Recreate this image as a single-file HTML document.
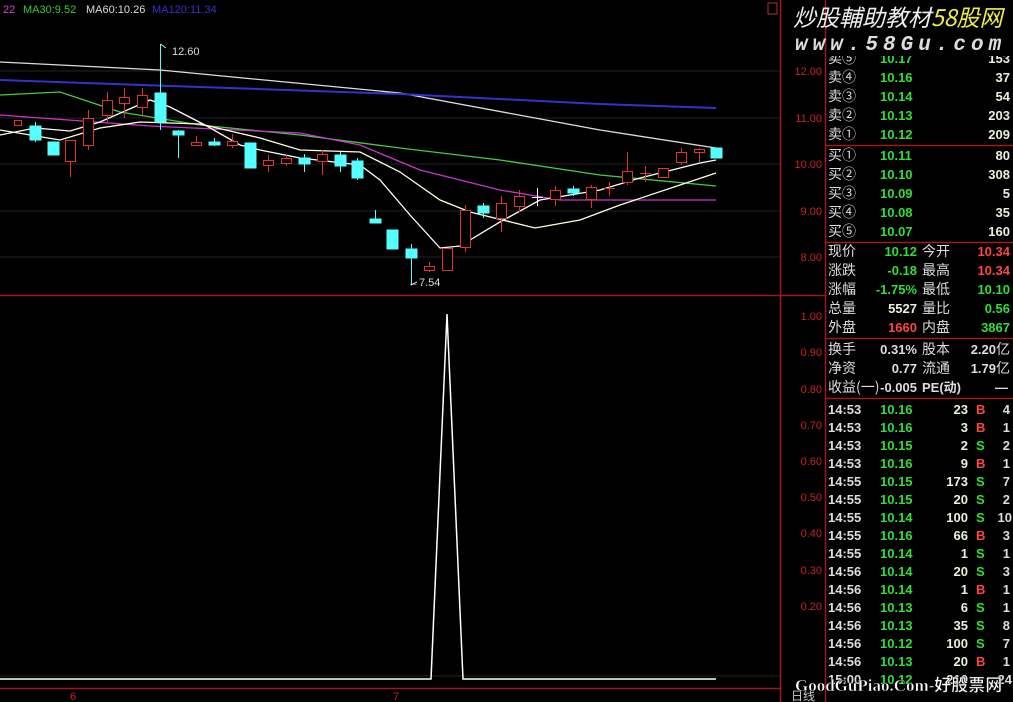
<!DOCTYPE html>
<html><head><meta charset="utf-8"><style>
html,body{margin:0;padding:0;background:#000;width:1013px;height:702px;overflow:hidden}
svg{display:block}
text{font-family:"Liberation Sans","Noto Sans CJK SC",sans-serif}
.r{font-size:13px;font-weight:bold}
.c{font-family:"Noto Sans CJK SC","WenQuanYi Zen Hei",sans-serif;font-size:14px;fill:#ddd;font-weight:normal}
.g{fill:#3d3}.y{fill:#eed}.w{fill:#ddd}.rd{fill:#f44}
.ax{font-size:11px;fill:#c22}
</style></head><body>
<svg width="1013" height="702" viewBox="0 0 1013 702" xmlns="http://www.w3.org/2000/svg">
<rect width="1013" height="702" fill="#000"/>
<g stroke="#222" stroke-width="1">
<line x1="0" y1="71" x2="780" y2="71"/><line x1="0" y1="118" x2="780" y2="118"/><line x1="0" y1="164" x2="780" y2="164"/><line x1="0" y1="211" x2="780" y2="211"/><line x1="0" y1="257" x2="780" y2="257"/>
<line x1="0" y1="676" x2="780" y2="676"/>
</g>
<g stroke="#a01818" stroke-width="1.5" fill="none">
<line x1="0" y1="295.5" x2="825" y2="295.5"/>
<line x1="780.5" y1="0" x2="780.5" y2="702"/>
<line x1="825.5" y1="0" x2="825.5" y2="702"/>
<line x1="0" y1="688.5" x2="780" y2="688.5"/>
<line x1="825" y1="145.5" x2="1013" y2="145.5"/>
<line x1="825" y1="242.5" x2="1013" y2="242.5"/>
<line x1="825" y1="338.5" x2="1013" y2="338.5"/>
<line x1="825" y1="398.5" x2="1013" y2="398.5"/>
</g>
<g class="ax" text-anchor="end">
<text x="822" y="75">12.00</text><text x="822" y="122">11.00</text><text x="822" y="168">10.00</text><text x="822" y="215">9.00</text><text x="822" y="261">8.00</text>
<text x="822" y="320">1.00</text><text x="822" y="356">0.90</text><text x="822" y="393">0.80</text><text x="822" y="429">0.70</text><text x="822" y="465">0.60</text><text x="822" y="501">0.50</text><text x="822" y="537">0.40</text><text x="822" y="574">0.30</text><text x="822" y="610">0.20</text>
</g>
<text x="70" y="700" class="ax">6</text><text x="393" y="700" class="ax">7</text>
<text x="791" y="700" style="font-size:12px;fill:#ccc;font-family:'Noto Sans CJK SC',sans-serif">日线</text>
<text x="3" y="13" style="font-size:11px;fill:#c4c">22</text>
<text x="23" y="13" style="font-size:11px;fill:#3c3">MA30:9.52</text>
<text x="86" y="13" style="font-size:11px;fill:#ddd">MA60:10.26</text>
<text x="152" y="13" style="font-size:11px;fill:#33c">MA120:11.34</text>
<rect x="768" y="3" width="9" height="11" fill="none" stroke="#a33"/>
<g fill="none" stroke-width="1.3">
<polyline stroke="#ddd" points="0,62 160,70 400,93 600,130 716,148"/>
<polyline stroke="#3333cc" stroke-width="2" points="0,80 200,87 400,94 600,104 716,108"/>
<polyline stroke="#4c4" points="0,95 60,92 120,112 200,125 300,135 400,148 500,160 600,175 716,186"/>
<polyline stroke="#c3c" points="0,115 150,126 300,133 360,145 420,170 500,190 560,200 716,200"/>
<polyline stroke="#fff" points="0,135 35,128 70,131 100,122 150,100 170,107 205,125 240,145 260,150 300,158 360,165 380,180 410,215 440,248 460,246 500,222 540,200 600,190 640,178 700,163 716,160"/>
<polyline stroke="#ffd" points="0,130 60,140 100,128 140,122 200,124 260,138 300,150 360,152 400,172 440,200 470,212 535,228 580,220 620,205 680,185 716,173"/>
</g>
<g stroke="#d33" fill="none" stroke-width="1">
<rect x="14.5" y="120.5" width="7" height="5"/>
<line x1="70.5" y1="140" x2="70.5" y2="177"/><rect x="65.5" y="140.5" width="10" height="21" fill="#000"/>
<line x1="88.5" y1="110" x2="88.5" y2="150"/><rect x="83.5" y="118.5" width="10" height="27" fill="#000"/>
<line x1="107.5" y1="92" x2="107.5" y2="122"/><rect x="102.5" y="100.5" width="10" height="15" fill="#000"/>
<line x1="124.5" y1="88" x2="124.5" y2="118"/><rect x="119.5" y="97.5" width="10" height="6" fill="#000"/>
<line x1="142.5" y1="88" x2="142.5" y2="115"/><rect x="137.5" y="95.5" width="10" height="12" fill="#000"/>
<line x1="196.5" y1="136" x2="196.5" y2="146"/><rect x="191.5" y="142.5" width="10" height="3" fill="#000"/>
<line x1="232.5" y1="134" x2="232.5" y2="148"/><rect x="227.5" y="141.5" width="10" height="4" fill="#000"/>
<line x1="268.5" y1="155" x2="268.5" y2="172"/><rect x="263.5" y="160.5" width="10" height="5" fill="#000"/>
<line x1="286.5" y1="155" x2="286.5" y2="166"/><rect x="281.5" y="158.5" width="10" height="5" fill="#000"/>
<line x1="322.5" y1="150" x2="322.5" y2="175"/><rect x="317.5" y="154.5" width="10" height="7" fill="#000"/>
<line x1="429.5" y1="262" x2="429.5" y2="272"/><rect x="424.5" y="266.5" width="10" height="4" fill="#000"/>
<rect x="442.5" y="248.5" width="10" height="22" fill="#000"/>
<line x1="465.5" y1="205" x2="465.5" y2="252"/><rect x="460.5" y="210.5" width="10" height="37" fill="#000"/>
<line x1="501.5" y1="196" x2="501.5" y2="232"/><rect x="496.5" y="203.5" width="10" height="15" fill="#000"/>
<line x1="519.5" y1="190" x2="519.5" y2="212"/><rect x="514.5" y="196.5" width="10" height="10" fill="#000"/>
<line x1="555.5" y1="186" x2="555.5" y2="206"/><rect x="550.5" y="190.5" width="10" height="9" fill="#000"/>
<line x1="591.5" y1="185" x2="591.5" y2="208"/><rect x="586.5" y="187.5" width="10" height="12" fill="#000"/>
<line x1="609.5" y1="182" x2="609.5" y2="196"/><line x1="604" y1="188.5" x2="615" y2="188.5"/>
<line x1="627.5" y1="152" x2="627.5" y2="185"/><rect x="622.5" y="171.5" width="10" height="11" fill="#000"/>
<line x1="645.5" y1="166" x2="645.5" y2="182"/><line x1="640" y1="173.5" x2="651" y2="173.5"/>
<rect x="658.5" y="168.5" width="10" height="9" fill="#000"/>
<line x1="681.5" y1="148" x2="681.5" y2="165"/><rect x="676.5" y="152.5" width="10" height="10" fill="#000"/>
<line x1="699.5" y1="148" x2="699.5" y2="162"/><rect x="694.5" y="149.5" width="10" height="3" fill="#000"/>
</g>
<g stroke="#fff" stroke-width="1"><line x1="537.5" y1="188" x2="537.5" y2="206"/><line x1="532" y1="197.5" x2="543" y2="197.5"/></g>
<g fill="#5ff" stroke="#5ff" stroke-width="1">
<line x1="35.5" y1="122" x2="35.5" y2="142"/><rect x="30" y="126" width="11" height="14"/>
<rect x="48" y="142" width="11" height="13"/>
<line x1="160.5" y1="44" x2="160.5" y2="130"/><rect x="155" y="93" width="11" height="29"/>
<line x1="178.5" y1="130" x2="178.5" y2="158"/><rect x="173" y="131" width="11" height="4"/>
<line x1="214.5" y1="138" x2="214.5" y2="146"/><rect x="209" y="142" width="11" height="3"/>
<rect x="245" y="143" width="11" height="25"/>
<line x1="304.5" y1="154" x2="304.5" y2="172"/><rect x="299" y="158" width="11" height="6"/>
<line x1="340.5" y1="152" x2="340.5" y2="172"/><rect x="335" y="155" width="11" height="11"/>
<line x1="357.5" y1="158" x2="357.5" y2="180"/><rect x="352" y="161" width="11" height="17"/>
<line x1="375.5" y1="210" x2="375.5" y2="223"/><rect x="370" y="219" width="11" height="4"/>
<rect x="387" y="230" width="11" height="19"/>
<line x1="411.5" y1="244" x2="411.5" y2="285"/><rect x="406" y="249" width="11" height="9"/>
<line x1="483.5" y1="203" x2="483.5" y2="218"/><rect x="478" y="206" width="11" height="7"/>
<line x1="573.5" y1="186" x2="573.5" y2="196"/><rect x="568" y="189" width="11" height="4"/>
<rect x="711" y="148" width="11" height="10"/>
</g>
<g stroke="#ddd" fill="none"><polyline points="160.5,44 166,48"/><polyline points="411,285 417,282"/></g>
<text x="172" y="55" style="font-size:11px;fill:#ddd">12.60</text>
<text x="408" y="286" style="font-size:11px;fill:#ddd">←7.54</text>
<polyline fill="none" stroke="#fff" stroke-width="1.5" points="0,679 431,679 447,314 463,679 716,679"/>
<g class="r">
<text x="828" y="63" class="c">卖⑤</text><text x="880" y="63" class="g">10.17</text><text x="1010" y="63" class="y" text-anchor="end">153</text>
<text x="828" y="82" class="c">卖④</text><text x="880" y="82" class="g">10.16</text><text x="1010" y="82" class="y" text-anchor="end">37</text>
<text x="828" y="101" class="c">卖③</text><text x="880" y="101" class="g">10.14</text><text x="1010" y="101" class="y" text-anchor="end">54</text>
<text x="828" y="120" class="c">卖②</text><text x="880" y="120" class="g">10.13</text><text x="1010" y="120" class="y" text-anchor="end">203</text>
<text x="828" y="139" class="c">卖①</text><text x="880" y="139" class="g">10.12</text><text x="1010" y="139" class="y" text-anchor="end">209</text>
<text x="828" y="160" class="c">买①</text><text x="880" y="160" class="g">10.11</text><text x="1010" y="160" class="y" text-anchor="end">80</text>
<text x="828" y="179" class="c">买②</text><text x="880" y="179" class="g">10.10</text><text x="1010" y="179" class="y" text-anchor="end">308</text>
<text x="828" y="198" class="c">买③</text><text x="880" y="198" class="g">10.09</text><text x="1010" y="198" class="y" text-anchor="end">5</text>
<text x="828" y="217" class="c">买④</text><text x="880" y="217" class="g">10.08</text><text x="1010" y="217" class="y" text-anchor="end">35</text>
<text x="828" y="236" class="c">买⑤</text><text x="880" y="236" class="g">10.07</text><text x="1010" y="236" class="y" text-anchor="end">160</text>
<text x="828" y="256" class="c">现价</text><text x="917" y="256" class="g" text-anchor="end">10.12</text><text x="922" y="256" class="c">今开</text><text x="1010" y="256" class="rd" text-anchor="end">10.34</text>
<text x="828" y="275" class="c">涨跌</text><text x="917" y="275" class="g" text-anchor="end">-0.18</text><text x="922" y="275" class="c">最高</text><text x="1010" y="275" class="rd" text-anchor="end">10.34</text>
<text x="828" y="294" class="c">涨幅</text><text x="917" y="294" class="g" text-anchor="end">-1.75%</text><text x="922" y="294" class="c">最低</text><text x="1010" y="294" class="g" text-anchor="end">10.10</text>
<text x="828" y="313" class="c">总量</text><text x="917" y="313" class="y" text-anchor="end">5527</text><text x="922" y="313" class="c">量比</text><text x="1010" y="313" class="g" text-anchor="end">0.56</text>
<text x="828" y="332" class="c">外盘</text><text x="917" y="332" class="rd" text-anchor="end">1660</text><text x="922" y="332" class="c">内盘</text><text x="1010" y="332" class="g" text-anchor="end">3867</text>
<text x="828" y="354" class="c">换手</text><text x="917" y="354" class="w" text-anchor="end">0.31%</text><text x="922" y="354" class="c">股本</text><text x="1010" y="354" class="w" text-anchor="end">2.20<tspan class="c">亿</tspan></text>
<text x="828" y="373" class="c">净资</text><text x="917" y="373" class="w" text-anchor="end">0.77</text><text x="922" y="373" class="c">流通</text><text x="1010" y="373" class="w" text-anchor="end">1.79<tspan class="c">亿</tspan></text>
<text x="828" y="392" class="c">收益(一)</text><text x="917" y="392" class="w" text-anchor="end">-0.005</text><text x="922" y="392" class="w">PE(动)</text><text x="1008" y="392" class="w" text-anchor="end">—</text>
</g>
<g class="r">
<text x="828" y="414" class="w">14:53</text><text x="880" y="414" class="g">10.16</text><text x="968" y="414" class="y" text-anchor="end">23</text><text x="976" y="414" class="rd">B</text><text x="1010" y="414" class="w" text-anchor="end">4</text>
<text x="828" y="432" class="w">14:53</text><text x="880" y="432" class="g">10.16</text><text x="968" y="432" class="y" text-anchor="end">3</text><text x="976" y="432" class="rd">B</text><text x="1010" y="432" class="w" text-anchor="end">1</text>
<text x="828" y="450" class="w">14:53</text><text x="880" y="450" class="g">10.15</text><text x="968" y="450" class="y" text-anchor="end">2</text><text x="976" y="450" class="g">S</text><text x="1010" y="450" class="w" text-anchor="end">2</text>
<text x="828" y="468" class="w">14:53</text><text x="880" y="468" class="g">10.16</text><text x="968" y="468" class="y" text-anchor="end">9</text><text x="976" y="468" class="rd">B</text><text x="1010" y="468" class="w" text-anchor="end">1</text>
<text x="828" y="486" class="w">14:55</text><text x="880" y="486" class="g">10.15</text><text x="968" y="486" class="y" text-anchor="end">173</text><text x="976" y="486" class="g">S</text><text x="1010" y="486" class="w" text-anchor="end">7</text>
<text x="828" y="504" class="w">14:55</text><text x="880" y="504" class="g">10.15</text><text x="968" y="504" class="y" text-anchor="end">20</text><text x="976" y="504" class="g">S</text><text x="1010" y="504" class="w" text-anchor="end">2</text>
<text x="828" y="522" class="w">14:55</text><text x="880" y="522" class="g">10.14</text><text x="968" y="522" class="y" text-anchor="end">100</text><text x="976" y="522" class="g">S</text><text x="1012" y="522" class="w" text-anchor="end">10</text>
<text x="828" y="540" class="w">14:55</text><text x="880" y="540" class="g">10.16</text><text x="968" y="540" class="y" text-anchor="end">66</text><text x="976" y="540" class="rd">B</text><text x="1010" y="540" class="w" text-anchor="end">3</text>
<text x="828" y="558" class="w">14:55</text><text x="880" y="558" class="g">10.14</text><text x="968" y="558" class="y" text-anchor="end">1</text><text x="976" y="558" class="g">S</text><text x="1010" y="558" class="w" text-anchor="end">1</text>
<text x="828" y="576" class="w">14:56</text><text x="880" y="576" class="g">10.14</text><text x="968" y="576" class="y" text-anchor="end">20</text><text x="976" y="576" class="g">S</text><text x="1010" y="576" class="w" text-anchor="end">3</text>
<text x="828" y="594" class="w">14:56</text><text x="880" y="594" class="g">10.14</text><text x="968" y="594" class="y" text-anchor="end">1</text><text x="976" y="594" class="rd">B</text><text x="1010" y="594" class="w" text-anchor="end">1</text>
<text x="828" y="612" class="w">14:56</text><text x="880" y="612" class="g">10.13</text><text x="968" y="612" class="y" text-anchor="end">6</text><text x="976" y="612" class="g">S</text><text x="1010" y="612" class="w" text-anchor="end">1</text>
<text x="828" y="630" class="w">14:56</text><text x="880" y="630" class="g">10.13</text><text x="968" y="630" class="y" text-anchor="end">35</text><text x="976" y="630" class="g">S</text><text x="1010" y="630" class="w" text-anchor="end">8</text>
<text x="828" y="648" class="w">14:56</text><text x="880" y="648" class="g">10.12</text><text x="968" y="648" class="y" text-anchor="end">100</text><text x="976" y="648" class="g">S</text><text x="1010" y="648" class="w" text-anchor="end">7</text>
<text x="828" y="666" class="w">14:56</text><text x="880" y="666" class="g">10.13</text><text x="968" y="666" class="y" text-anchor="end">20</text><text x="976" y="666" class="rd">B</text><text x="1010" y="666" class="w" text-anchor="end">1</text>
<text x="828" y="684" class="w">15:00</text><text x="880" y="684" class="g">10.12</text><text x="968" y="684" class="y" text-anchor="end">210</text><text x="1012" y="684" class="w" text-anchor="end">24</text>
</g>
<!-- watermark box -->
<rect x="783" y="0" width="230" height="56" fill="#000"/>
<line x1="825.5" y1="0" x2="825.5" y2="56" stroke="#a01818" stroke-width="1.5"/>
<text x="793" y="26" style="font-family:'Noto Sans CJK SC',sans-serif;font-size:23px;font-style:italic;fill:#eee">炒股輔助教材<tspan fill="#ee4">58股网</tspan></text>
<text x="795" y="50" style="font-family:'Liberation Mono',monospace;font-size:21px;font-style:italic;font-weight:bold;fill:#ddd;letter-spacing:5px">www.58Gu.com</text>
<text x="795" y="691" style="font-family:'Liberation Serif','Noto Sans CJK SC',serif;font-size:17px;font-weight:bold;fill:#fff;stroke:#000;stroke-width:0.5">GoodGuPiao.Com-好股票网</text>
</svg>
</body></html>
